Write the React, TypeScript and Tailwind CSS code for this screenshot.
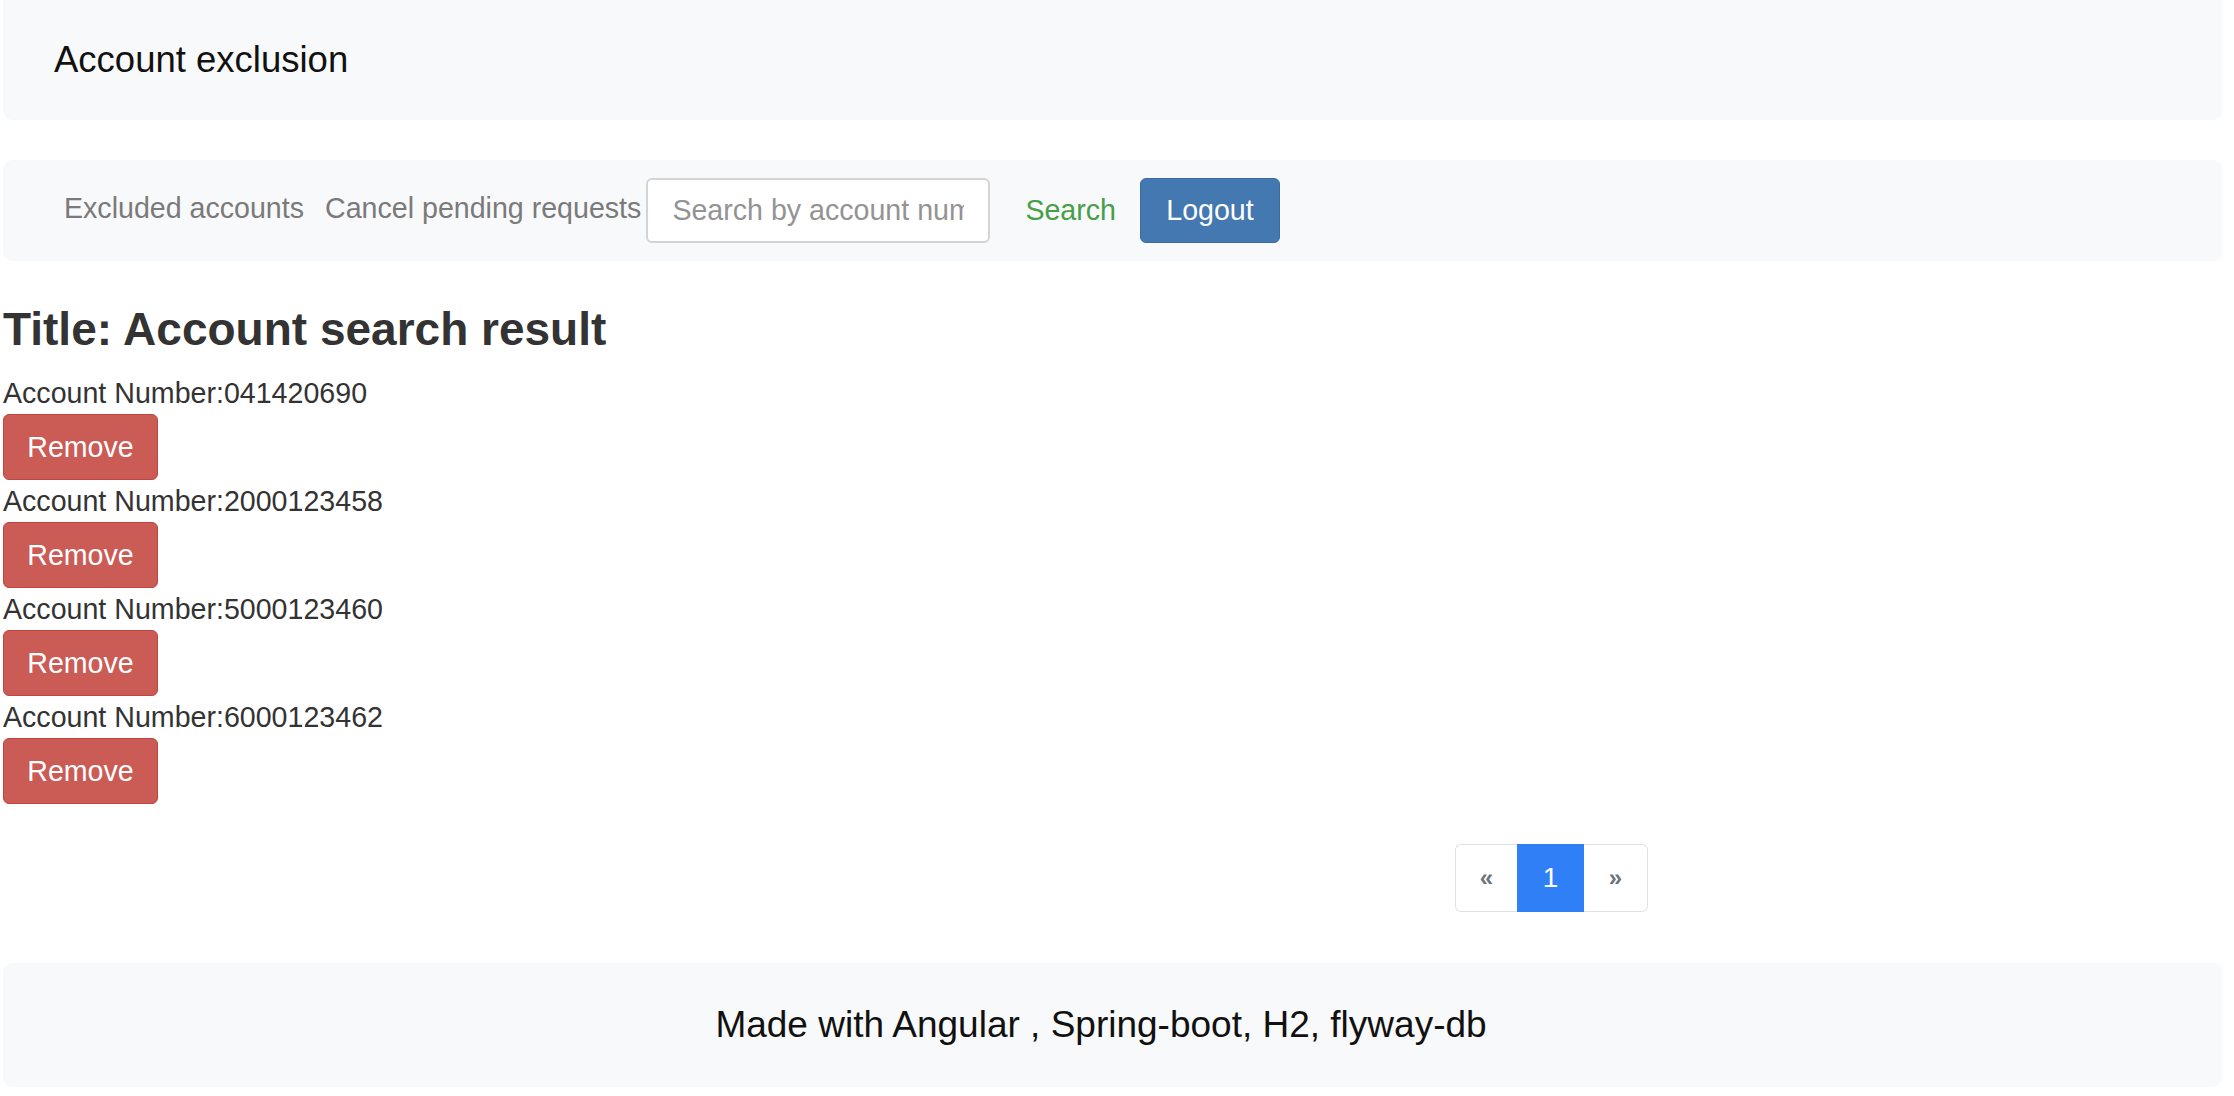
import React from "react";

const accounts = ["041420690", "2000123458", "5000123460", "6000123462"];

function AccountItem({ number }: { number: string }) {
  return (
    <div>
      <div className="text-[28.6px] leading-[42px] text-[#333]">Account Number:{number}</div>
      <button className="w-[155px] h-[66px] bg-[#cb5b55] border border-[#c4443d] rounded-[6px] text-white text-[28.6px] leading-none">
        Remove
      </button>
    </div>
  );
}

export default function App() {
  return (
    <div className="min-h-screen bg-white pl-[3px] pr-[12px] font-['Liberation_Sans',Arial,sans-serif] text-[#212529]">
      {/* Header */}
      <header className="h-[120px] bg-[#f8f9fa] rounded-b-[9px] flex items-center pl-[51px]">
        <span className="text-[36.5px] text-[#111]">Account exclusion</span>
      </header>

      {/* Nav */}
      <nav className="mt-[40px] h-[101px] bg-[#f8f9fa] rounded-[9px] flex items-center pl-[61px]">
        <a className="text-[28.6px] text-[#7a7a7a] -mt-[5px]">Excluded accounts</a>
        <a className="ml-[21px] text-[28.6px] text-[#7a7a7a] -mt-[5px]">Cancel pending requests</a>
        <input
          type="text"
          placeholder="Search by account number"
          className="ml-[5px] w-[344px] h-[65px] bg-white border-2 border-[#d4d4d4] rounded-[6px] px-[24px] text-[28.6px] placeholder:text-[#939393] outline-none"
        />
        <button className="ml-[35px] text-[28.6px] text-[#45a047]">Search</button>
        <button className="ml-[24px] w-[140px] h-[65px] bg-[#4378b1] border border-[#3a6ca3] rounded-[6px] text-white text-[28.6px]">
          Logout
        </button>
      </nav>

      {/* Results */}
      <main>
        <h3 className="mt-[38px] mb-[13px] text-[46px] leading-[60px] font-bold text-[#333]">
          Title: Account search result
        </h3>
        {accounts.map((n) => (
          <AccountItem key={n} number={n} />
        ))}

        <div className="mt-[40px] ml-[1452px] flex h-[68px] text-[28px]">
          <a className="w-[62px] flex items-center justify-center border border-[#dee2e6] border-r-0 rounded-l-[6px] text-[#6c757d] font-bold text-[24px]">
            «
          </a>
          <a className="w-[67px] flex items-center justify-center bg-[#2f7ff6] text-white">1</a>
          <a className="w-[64px] flex items-center justify-center border border-[#dee2e6] border-l-0 rounded-r-[6px] text-[#6c757d] font-bold text-[24px]">
            »
          </a>
        </div>
      </main>

      {/* Footer */}
      <footer className="mt-[51px] h-[124px] bg-[#f8f9fa] rounded-[9px] flex items-center justify-center pr-[23px]">
        <span className="text-[37px] text-[#111]">Made with Angular , Spring-boot, H2, flyway-db</span>
      </footer>
    </div>
  );
}
